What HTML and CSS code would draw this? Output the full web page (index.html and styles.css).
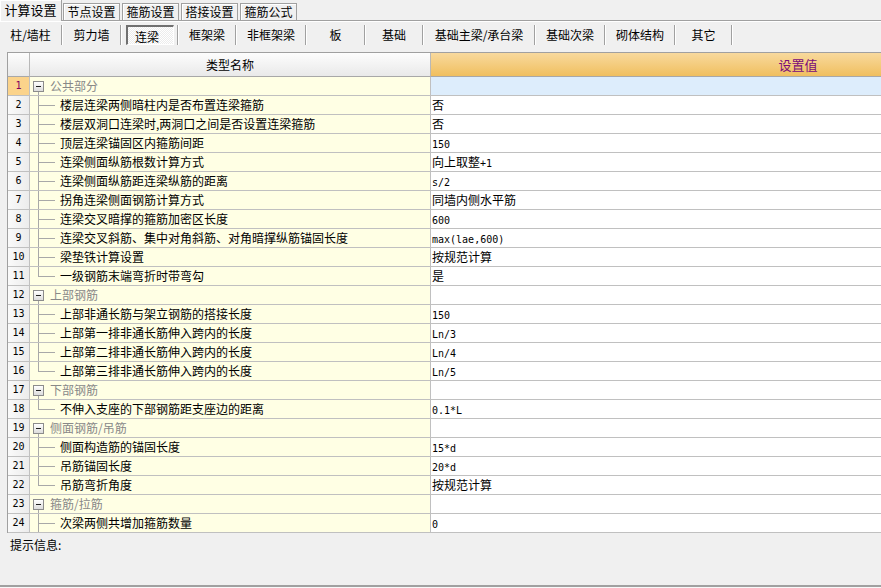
FILE: index.html
```html
<!DOCTYPE html>
<html lang="zh">
<head>
<meta charset="utf-8">
<link rel="stylesheet" href="styles.css">
</head>
<body>
<div class="tabs">
  <div class="tab active">计算设置</div>
  <div class="tab">节点设置</div>
  <div class="tab">箍筋设置</div>
  <div class="tab">搭接设置</div>
  <div class="tab">箍筋公式</div>
</div>
<div class="toolbar">
  <div class="btn">柱/墙柱</div>
  <div class="btn">剪力墙</div>
  <div class="btn down"><span class="pressed">连梁</span></div>
  <div class="btn">框架梁</div>
  <div class="btn">非框架梁</div>
  <div class="btn">板</div>
  <div class="btn">基础</div>
  <div class="btn">基础主梁/承台梁</div>
  <div class="btn">基础次梁</div>
  <div class="btn">砌体结构</div>
  <div class="btn">其它</div>
</div>
<div class="table">
  <div class="row head">
    <div class="c num"></div>
    <div class="c name">类型名称</div>
    <div class="c val">设置值</div>
  </div>
  <div class="row group sel"><div class="c num">1</div><div class="c name"><span class="minus"></span>公共部分</div><div class="c val"></div></div>
  <div class="row"><div class="c num">2</div><div class="c name">楼层连梁两侧暗柱内是否布置连梁箍筋</div><div class="c val">否</div></div>
  <div class="row"><div class="c num">3</div><div class="c name">楼层双洞口连梁时,两洞口之间是否设置连梁箍筋</div><div class="c val">否</div></div>
  <div class="row"><div class="c num">4</div><div class="c name">顶层连梁锚固区内箍筋间距</div><div class="c val"><span class="m">150</span></div></div>
  <div class="row"><div class="c num">5</div><div class="c name">连梁侧面纵筋根数计算方式</div><div class="c val">向上取整<span class="m">+1</span></div></div>
  <div class="row"><div class="c num">6</div><div class="c name">连梁侧面纵筋距连梁纵筋的距离</div><div class="c val"><span class="m">s/2</span></div></div>
  <div class="row"><div class="c num">7</div><div class="c name">拐角连梁侧面钢筋计算方式</div><div class="c val">同墙内侧水平筋</div></div>
  <div class="row"><div class="c num">8</div><div class="c name">连梁交叉暗撑的箍筋加密区长度</div><div class="c val"><span class="m">600</span></div></div>
  <div class="row"><div class="c num">9</div><div class="c name">连梁交叉斜筋、集中对角斜筋、对角暗撑纵筋锚固长度</div><div class="c val"><span class="m">max(lae,600)</span></div></div>
  <div class="row"><div class="c num">10</div><div class="c name">梁垫铁计算设置</div><div class="c val">按规范计算</div></div>
  <div class="row last"><div class="c num">11</div><div class="c name">一级钢筋末端弯折时带弯勾</div><div class="c val">是</div></div>
  <div class="row group"><div class="c num">12</div><div class="c name"><span class="minus"></span>上部钢筋</div><div class="c val"></div></div>
  <div class="row"><div class="c num">13</div><div class="c name">上部非通长筋与架立钢筋的搭接长度</div><div class="c val"><span class="m">150</span></div></div>
  <div class="row"><div class="c num">14</div><div class="c name">上部第一排非通长筋伸入跨内的长度</div><div class="c val"><span class="m">Ln/3</span></div></div>
  <div class="row"><div class="c num">15</div><div class="c name">上部第二排非通长筋伸入跨内的长度</div><div class="c val"><span class="m">Ln/4</span></div></div>
  <div class="row last"><div class="c num">16</div><div class="c name">上部第三排非通长筋伸入跨内的长度</div><div class="c val"><span class="m">Ln/5</span></div></div>
  <div class="row group"><div class="c num">17</div><div class="c name"><span class="minus"></span>下部钢筋</div><div class="c val"></div></div>
  <div class="row last"><div class="c num">18</div><div class="c name">不伸入支座的下部钢筋距支座边的距离</div><div class="c val"><span class="m">0.1*L</span></div></div>
  <div class="row group"><div class="c num">19</div><div class="c name"><span class="minus"></span>侧面钢筋/吊筋</div><div class="c val"></div></div>
  <div class="row"><div class="c num">20</div><div class="c name">侧面构造筋的锚固长度</div><div class="c val"><span class="m">15*d</span></div></div>
  <div class="row"><div class="c num">21</div><div class="c name">吊筋锚固长度</div><div class="c val"><span class="m">20*d</span></div></div>
  <div class="row last"><div class="c num">22</div><div class="c name">吊筋弯折角度</div><div class="c val">按规范计算</div></div>
  <div class="row group"><div class="c num">23</div><div class="c name"><span class="minus"></span>箍筋/拉筋</div><div class="c val"></div></div>
  <div class="row"><div class="c num">24</div><div class="c name">次梁两侧共增加箍筋数量</div><div class="c val"><span class="m">0</span></div></div>
</div>
<div class="info">提示信息:</div>
<div class="status"></div>
</body>
</html>
```

FILE: styles.css
```css
html, body {
  margin: 0;
  padding: 0;
  overflow: hidden;
  width: 881px;
  height: 588px;
}
body {
  background: #f0f0f0;
  font-family: "Noto Sans CJK SC", "Noto Sans", sans-serif;
  font-size: 12px;
  color: #000;
}

/* ---------- tabs ---------- */
.tabs {
  display: flex;
  align-items: flex-end;
  height: 20px;
  border-bottom: 1px solid #a0a0a0;
  box-shadow: 0 1px 0 #fff;
}
.tab {
  box-sizing: border-box;
  width: 57px;
  height: 17px;
  margin-left: 2px;
  border: 1px solid #a0a0a0;
  border-bottom: none;
  box-shadow: inset 1px 1px 0 #fff;
  text-align: center;
  line-height: 16px;
}
.tab.active {
  width: 62px;
  height: 21px;
  margin-left: 0;
  margin-right: -1px;
  margin-bottom: -1px;
  border: none;
  border-right: 1px solid #a0a0a0;
  background: #f0f0f0;
  box-shadow: inset 1px 1px 0 #fff;
  line-height: 20px;
  font-size: 13px;
  position: relative;
  z-index: 1;
}

/* ---------- toolbar ---------- */
.toolbar {
  display: flex;
  height: 20px;
  padding: 3px 0;
  margin-top: 1px;
}
.btn {
  box-sizing: border-box;
  flex: none;
  width: 57px;
  height: 20px;
  line-height: 19px;
  text-align: center;
  border-right: 1px solid #a0a0a0;
  box-shadow: 1px 0 0 #fff;
  margin-right: 1px;
  white-space: nowrap;
}
.btn:nth-child(1) { width: 62px; }
.btn:nth-child(2) { width: 58px; }
.btn:nth-child(3) { width: 56px; }
.btn:nth-child(4) { width: 57px; }
.btn:nth-child(5) { width: 69px; }
.btn:nth-child(6) { width: 58px; }
.btn:nth-child(7) { width: 57px; }
.btn:nth-child(8) { width: 111px; }
.btn:nth-child(9) { width: 69px; }
.btn:nth-child(10) { width: 69px; }
.btn:nth-child(11) { width: 56px; }
.btn.down { padding: 0 4px; text-align: left; }
.pressed {
  display: block;
  box-sizing: border-box;
  width: 48px;
  height: 20px;
  padding-left: 7px;
  line-height: 19px;
  border-top: 2px solid #707070;
  border-left: 2px solid #707070;
  border-right: 1px solid #fff;
  border-bottom: 1px solid #fff;
  background: repeating-conic-gradient(#ffffff 0 25%, #ececec 0 50%) 0 0 / 2px 2px;
}

/* ---------- table ---------- */
.table {
  margin-top: 4px;
  margin-left: 7px;
  border-left: 1px solid #a0a0a0;
  border-top: 1px solid #a0a0a0;
  overflow: hidden;
}
.row {
  display: grid;
  grid-template-columns: 22px 401px 734px;
  height: 19px;
}
.c {
  box-sizing: border-box;
  border-right: 1px solid #c0c0c0;
  border-bottom: 1px solid #c0c0c0;
  line-height: 18px;
  white-space: nowrap;
  overflow: hidden;
}
.num {
  background: linear-gradient(90deg, #fafafa, #ececec);
  text-align: center;
  font-family: "DejaVu Sans Mono", monospace;
  font-size: 10px;
}
.name {
  background:
    linear-gradient(#a8a8a8, #a8a8a8) 8px 0 / 1px 100% no-repeat,
    linear-gradient(#a8a8a8, #a8a8a8) 8px 9px / 17px 1px no-repeat,
    #ffffe4;
  padding-left: 30px;
}
.row.last .name {
  background:
    linear-gradient(#a8a8a8, #a8a8a8) 8px 0 / 1px 10px no-repeat,
    linear-gradient(#a8a8a8, #a8a8a8) 8px 9px / 17px 1px no-repeat,
    #ffffe4;
}
.row.group .name {
  background:
    linear-gradient(#a8a8a8, #a8a8a8) 8px 14px / 1px 100% no-repeat,
    #ffffe4;
  padding-left: 3px;
  color: #888;
}
.val {
  background: #fff;
  padding-left: 1px;
}
.m {
  font-family: "DejaVu Sans Mono", monospace;
  font-size: 10px;
}
.minus {
  display: inline-block;
  box-sizing: border-box;
  width: 11px;
  height: 11px;
  margin-right: 6px;
  vertical-align: -1px;
  border: 1px solid #8c8c8c;
  background:
    linear-gradient(#202020, #202020) center / 5px 1px no-repeat,
    linear-gradient(#ffffff, #dcdcdc);
}

.row.sel .num {
  background: #fbd38b;
  color: #800060;
}
.row.sel .val { background: #ddedfc; }

.row.head { height: 24px; }
.row.head .c {
  line-height: 23px;
  border-bottom-color: #a8a8a8;
  border-right-color: #b8b8b8;
}
.row.head .num,
.row.head .name {
  background: linear-gradient(#fdfdfd, #e9e9e9);
  text-align: center;
  padding: 0;
  color: #000;
}
.row.head .val {
  background: linear-gradient(#f8d99d, #f0bf5f);
  text-align: center;
  color: #7a0a7a;
  font-size: 13px;
}

/* ---------- info ---------- */
.info {
  height: 52px;
  box-sizing: border-box;
  padding: 3px 0 0 10px;
  line-height: 18px;
}
.status {
  border-top: 2px solid #a0a0a0;
  height: 10px;
  background: #f8f8f8;
}
```
